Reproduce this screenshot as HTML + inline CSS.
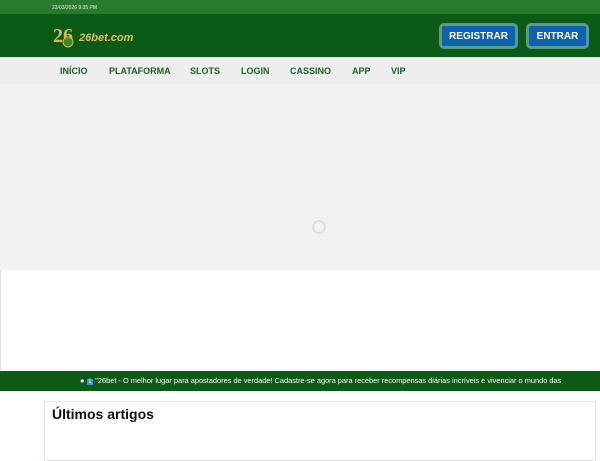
<!DOCTYPE html>
<html><head><meta charset="utf-8"><style>
*{margin:0;padding:0;box-sizing:border-box}
body{width:600px;height:450px;overflow:hidden;background:#fff;font-family:"Liberation Sans",Arial,sans-serif;position:relative}
.top{position:absolute;left:0;top:0;width:600px;height:14px;background:#2a7a2e;color:#e8f0e8;font-size:5px;padding:5px 0 0 52px}
.hdr{position:absolute;left:0;top:14px;width:600px;height:43px;background:#0b5a15}
.logo{position:absolute;left:53px;top:8px;width:26px;height:28px}
.logotxt{position:absolute;left:79px;top:18px;color:#e0c060;font-weight:bold;font-style:italic;font-size:11px}
.btn{position:absolute;top:9px;height:26px;background:#0a62b0;border:3px solid #5a9a8a;border-radius:5px;color:#fff;font-weight:bold;font-size:10px;text-align:center;line-height:22px}
.nav{position:absolute;left:0;top:57px;width:600px;height:27px;background:#eeeeee;border-top:1px solid #ddd}
.nav span{position:absolute;top:8px;font-size:9px;font-weight:bold;color:#1e5e28}
.hero{position:absolute;left:0;top:84px;width:600px;height:186px;background:#f2f2f2}
.spin{position:absolute;left:312px;top:220px;width:14px;height:14px;border:2px solid #ddd;border-radius:50%}
.ln{position:absolute;left:0;top:270px;width:1px;height:101px;background:#dde}
.tick{position:absolute;left:0;top:371px;width:600px;height:20px;background:#0b5a15;color:#fff;font-size:7.4px;white-space:nowrap;overflow:hidden;padding:5px 0 0 80px}
.box{position:absolute;left:44px;top:401px;width:552px;height:60px;border:1px solid #e6e6d8;border-radius:2px}
.box h2{font-size:14px;font-weight:bold;color:#111;margin:4px 0 0 7px}
</style></head><body>
<div class="top">23/03/2026 9:35 PM</div>
<div class="hdr">
<svg class="logo" viewBox="0 0 26 28"><text x="0" y="20" font-size="20" font-weight="bold" fill="#d8b850" font-family="Liberation Serif">26</text><circle cx="15" cy="20" r="5" fill="#3a8a30" stroke="#d8b850"/></svg>
<div class="logotxt">26bet.com</div>
<div class="btn" style="left:439px;width:79px">REGISTRAR</div>
<div class="btn" style="left:526px;width:63px">ENTRAR</div>
</div>
<div class="nav">
<span style="left:60px">INÍCIO</span><span style="left:109px">PLATAFORMA</span><span style="left:190px">SLOTS</span><span style="left:241px">LOGIN</span><span style="left:290px">CASSINO</span><span style="left:352px">APP</span><span style="left:391px">VIP</span>
</div>
<div class="hero"></div>
<div class="spin"></div>
<div class="ln"></div>
<div class="tick">● <span style="background:#4a8ad0;font-size:6px">&nbsp;1&nbsp;</span> "26bet - O melhor lugar para apostadores de verdade! Cadastre-se agora para receber recompensas diárias incríveis e vivenciar o mundo das</div>
<div class="box"><h2>Últimos artigos</h2></div>
</body></html>
